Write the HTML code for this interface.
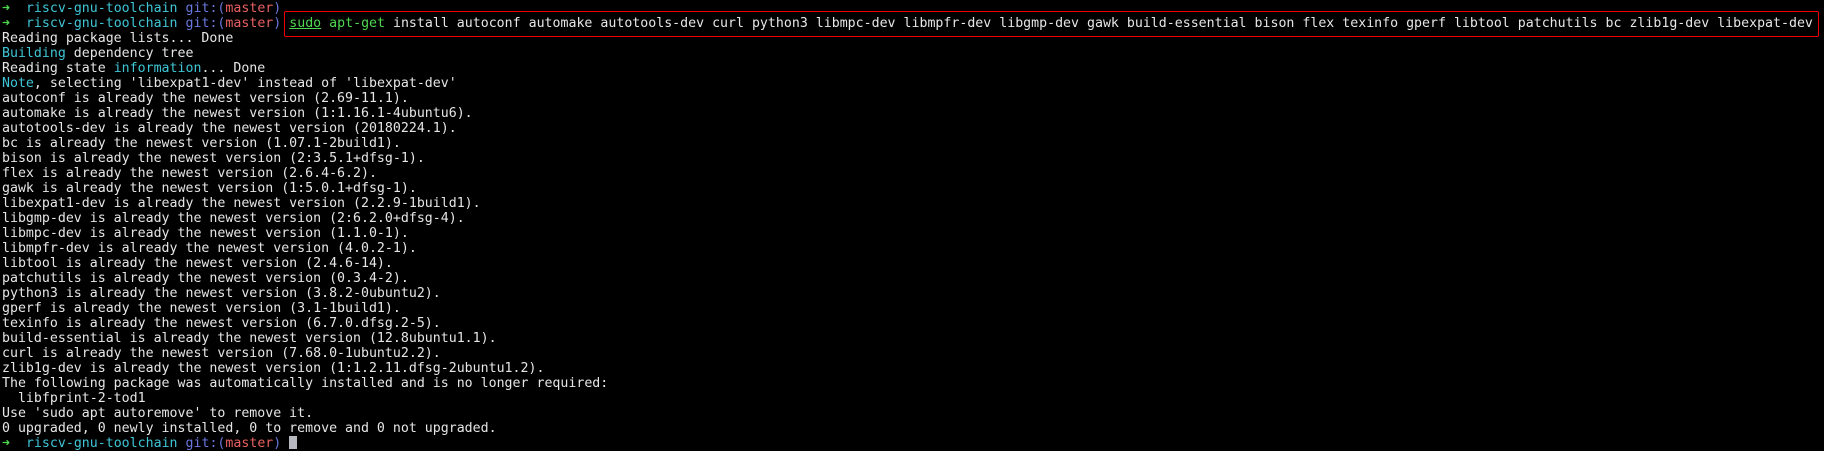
<!DOCTYPE html>
<html><head><meta charset="utf-8"><style>
html,body{margin:0;padding:0;background:#fff;}
#t{position:absolute;left:0;top:0;width:1824px;height:451px;background:#000;overflow:hidden;}
pre{margin:0;position:absolute;left:2px;top:1px;font-family:"DejaVu Sans Mono","Liberation Mono",monospace;font-size:13.25px;line-height:15px;color:#e6e6e6;white-space:pre;}
.g{color:#4fd84f}.c{color:#3fc6d6}.b{color:#6a78e0}.r{color:#e8605f}
.box{position:absolute;left:284px;top:11px;width:1533px;height:24px;border:1px solid #e00;border-radius:2px;}
.cur{display:inline-block;width:8px;height:13px;background:#b8b8c0;vertical-align:-2px;}
</style></head><body><div id="t">
<div class="box"></div>
<pre><span class="g">➜</span>  <span class="c">riscv-gnu-toolchain</span> <span class="b">git:(</span><span class="r">master</span><span class="b">)</span>
<span class="g">➜</span>  <span class="c">riscv-gnu-toolchain</span> <span class="b">git:(</span><span class="r">master</span><span class="b">)</span> <span class="g" style="text-decoration:underline">sudo</span> <span class="g">apt-get</span> install autoconf automake autotools-dev curl python3 libmpc-dev libmpfr-dev libgmp-dev gawk build-essential bison flex texinfo gperf libtool patchutils bc zlib1g-dev libexpat-dev
Reading package lists... Done
<span class="c">Building</span> dependency tree
Reading state <span class="c">information</span>... Done
<span class="c">Note</span>, selecting 'libexpat1-dev' instead of 'libexpat-dev'
autoconf is already the newest version (2.69-11.1).
automake is already the newest version (1:1.16.1-4ubuntu6).
autotools-dev is already the newest version (20180224.1).
bc is already the newest version (1.07.1-2build1).
bison is already the newest version (2:3.5.1+dfsg-1).
flex is already the newest version (2.6.4-6.2).
gawk is already the newest version (1:5.0.1+dfsg-1).
libexpat1-dev is already the newest version (2.2.9-1build1).
libgmp-dev is already the newest version (2:6.2.0+dfsg-4).
libmpc-dev is already the newest version (1.1.0-1).
libmpfr-dev is already the newest version (4.0.2-1).
libtool is already the newest version (2.4.6-14).
patchutils is already the newest version (0.3.4-2).
python3 is already the newest version (3.8.2-0ubuntu2).
gperf is already the newest version (3.1-1build1).
texinfo is already the newest version (6.7.0.dfsg.2-5).
build-essential is already the newest version (12.8ubuntu1.1).
curl is already the newest version (7.68.0-1ubuntu2.2).
zlib1g-dev is already the newest version (1:1.2.11.dfsg-2ubuntu1.2).
The following package was automatically installed and is no longer required:
  libfprint-2-tod1
Use 'sudo apt autoremove' to remove it.
0 upgraded, 0 newly installed, 0 to remove and 0 not upgraded.
<span class="g">➜</span>  <span class="c">riscv-gnu-toolchain</span> <span class="b">git:(</span><span class="r">master</span><span class="b">)</span> <span class="cur"></span></pre>
</div></body></html>
